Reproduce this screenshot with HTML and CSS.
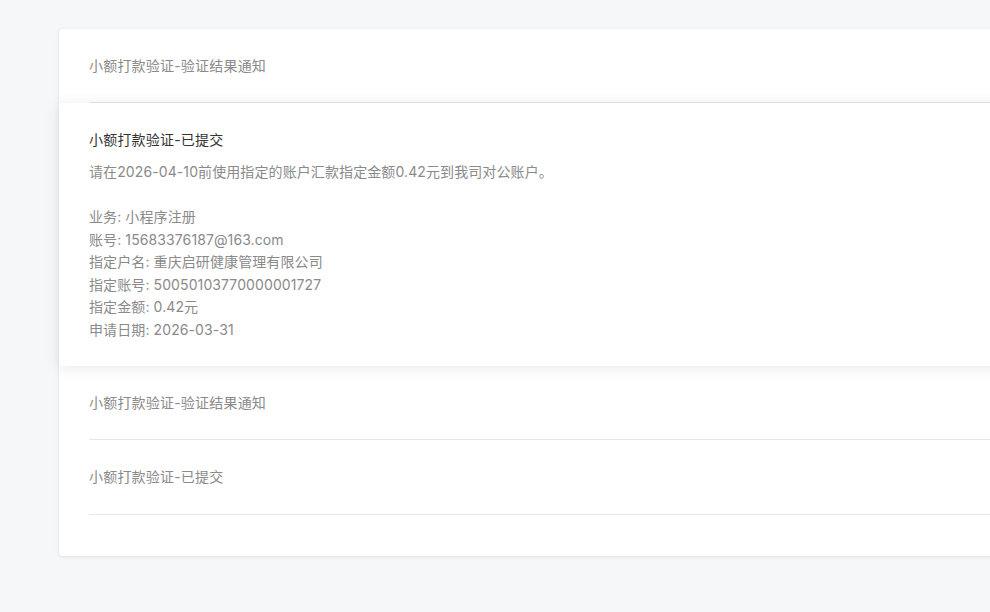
FILE: index.html
```html
<!DOCTYPE html>
<html lang="zh-CN">
<head>
    <meta charset="UTF-8">
    <meta name="viewport" content="width=device-width, initial-scale=1.0">
    <title>消息通知</title>
    <link rel="stylesheet" href="styles.css">
</head>
<body>
    <div class="msg-card">
        <div class="msg-item">
            <div class="msg-title">小额打款验证-验证结果通知</div>
        </div>
        <div class="msg-item active">
            <div class="msg-title">小额打款验证-已提交</div>
            <div class="msg-body">
                <p class="msg-desc">请在2026-04-10前使用指定的账户汇款指定金额0.42元到我司对公账户。</p>
                <p>业务: 小程序注册</p>
                <p>账号: 15683376187@163.com</p>
                <p>指定户名: 重庆启研健康管理有限公司</p>
                <p>指定账号: 50050103770000001727</p>
                <p>指定金额: 0.42元</p>
                <p>申请日期: 2026-03-31</p>
            </div>
        </div>
        <div class="msg-item">
            <div class="msg-title">小额打款验证-验证结果通知</div>
        </div>
        <div class="msg-item">
            <div class="msg-title">小额打款验证-已提交</div>
        </div>
    </div>
</body>
</html>
```

FILE: styles.css
```css
* {
    margin: 0;
    padding: 0;
    box-sizing: border-box;
    font-family: Inter, 'Noto Sans CJK SC', sans-serif;
}

html, body {
    overflow: hidden;
}

body {
    min-height: 100vh;
    background: #f6f7f9;
    padding: 29px 0 0 59px;
}

.msg-card {
    width: 1000px;
    background: white;
    border-radius: 4px;
    box-shadow: 0 1px 4px rgba(0, 0, 0, 0.09);
    padding-bottom: 41px;
}

.msg-item {
    padding: 0 30px;
}

.msg-title {
    font-size: 14px;
    line-height: 20px;
    letter-spacing: 0.2px;
    color: #8a8a8a;
    padding: 27px 0 26px;
    border-bottom: 1px solid #e6e6e6;
}

.msg-item:last-child .msg-title {
    padding-bottom: 27px;
}

.msg-item.active {
    padding: 26px 30px 25px;
    box-shadow: 0 2px 14px rgba(0, 0, 0, 0.09);
    position: relative;
}

.msg-item.active .msg-title {
    color: #333;
    padding: 0;
    border: none;
    line-height: 22px;
    margin-bottom: 10px;
}

.msg-body p {
    font-size: 14px;
    line-height: 22.5px;
    letter-spacing: 0.1px;
    color: #8a8a8a;
}

.msg-body .msg-desc {
    margin-bottom: 22.5px;
}
```
